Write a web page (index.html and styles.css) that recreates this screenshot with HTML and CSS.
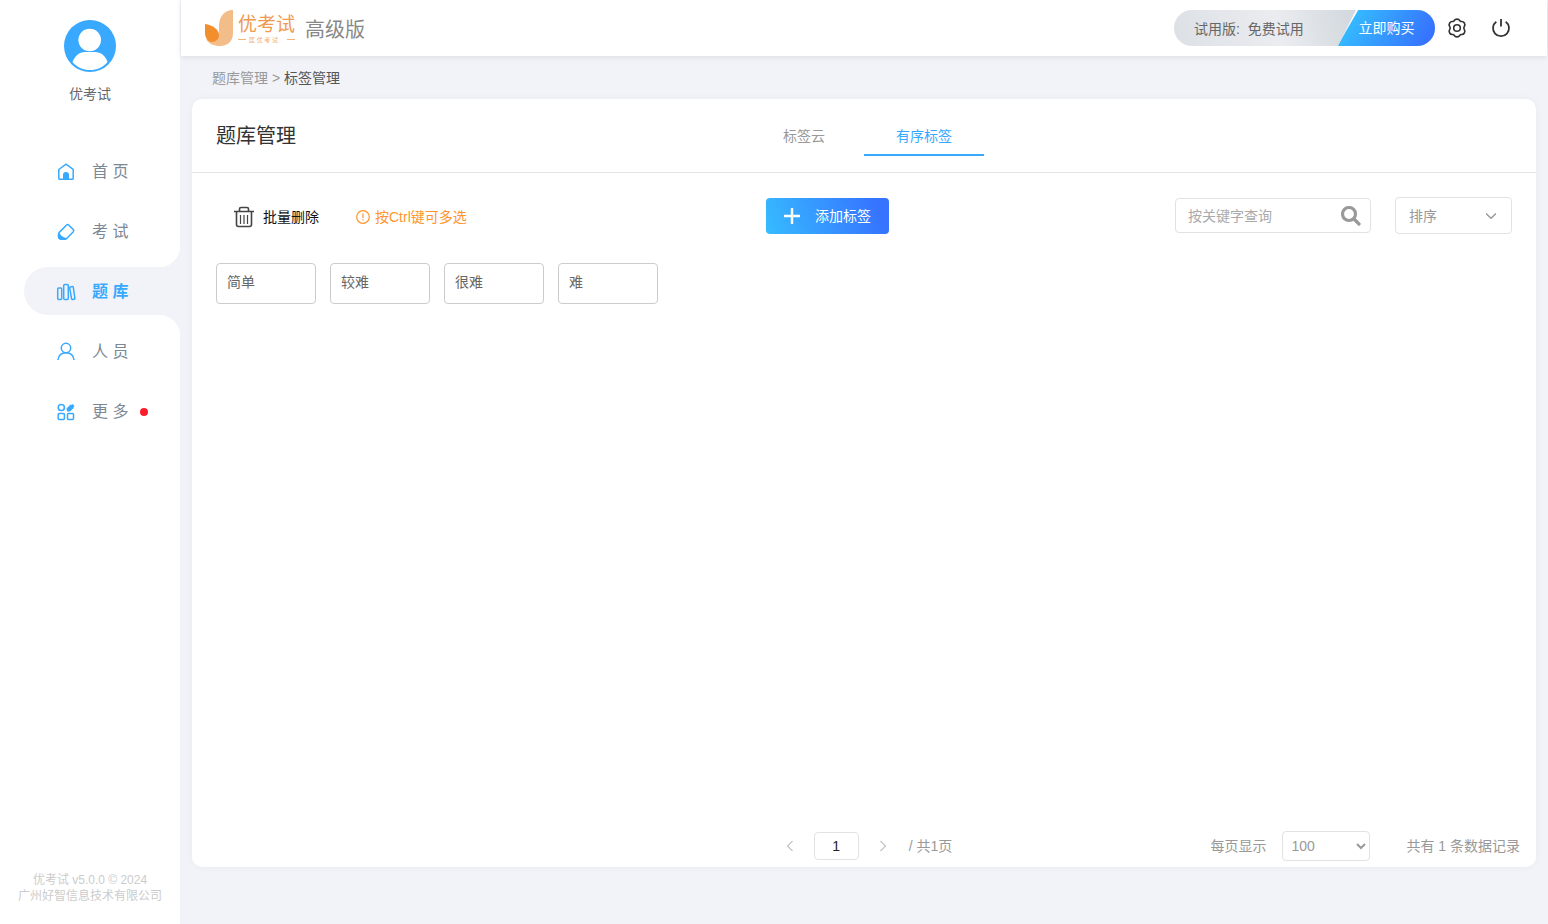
FILE: index.html
```html
<!DOCTYPE html>
<html lang="zh-CN">
<head>
<meta charset="utf-8">
<title>标签管理</title>
<link rel="stylesheet" href="styles.css">
</head>
<body>
<aside class="sidebar">
  <div class="profile">
    <svg class="avatar" viewBox="0 0 52 52" aria-hidden="true"><circle cx="26" cy="26" r="26" fill="#38a9ff"/><circle cx="25.700" cy="20" r="11.300" fill="#fff"/><path d="M8.500 42C11 36 15 32 21 32H31C37 32 41.500 36 43.500 42C39 47.500 33 50 26 50S13 47.500 8.500 42Z" fill="#fff"/></svg>
    <span>优考试</span>
  </div>
  <nav class="nav">
    <a class="nav-item" href="#"><svg viewBox="0 0 20 20"><path d="M2.800 7.500 10 2.200 17.200 7.500V16.200Q17.200 17.300 16.100 17.300H3.900Q2.800 17.300 2.800 16.200Z"/><path class="solid" d="M7 18V13a3 3 0 0 1 6 0V18Z"/></svg><span>首 页</span></a>
    <a class="nav-item" href="#"><svg viewBox="0 0 20 20"><path d="M3.300 10.400 10.600 3Q11.600 2 12.700 3L17.300 7.600Q18.300 8.600 17.300 9.700L11 16.200Q10 17.300 8.500 17.300H5.500Q3 17.300 2.500 14.600 2.100 11.700 3.300 10.400Z"/><path class="solid" d="M3 10C4 13 6.500 15.300 11 16.200L8.800 18H5.300C2.500 17.700 1.500 15 2 12.300Z"/></svg><span>考 试</span></a>
    <a class="nav-item active" href="#"><svg viewBox="0 0 20 20"><rect x="1.700" y="6" width="4" height="11.500" rx="1"/><rect x="7.700" y="2.400" width="4.600" height="15.100" rx="1"/><path d="M13.700 5.800Q13.600 5 14.400 4.900L16.400 4.600Q17.100 4.500 17.300 5.300L18.900 16.400Q19 17.200 18.200 17.300L16.500 17.500Q15.800 17.600 15.600 16.800Z"/></svg><span>题 库</span></a>
    <a class="nav-item" href="#"><svg viewBox="0 0 20 20"><circle cx="10" cy="6" r="4.700"/><path d="M1.900 18C2.500 13.300 5.800 10.700 10 10.700S17.500 13.300 18.100 18"/></svg><span>人 员</span></a>
    <a class="nav-item" href="#"><svg viewBox="0 0 20 20"><circle cx="5.300" cy="5.500" r="3.100"/><rect x="2.200" y="11.500" width="6.200" height="6" rx="1"/><rect x="11.500" y="11.500" width="6" height="6" rx="1"/><path class="solid" d="M10.500 6.500 14.500 2.500 15.500 3 16.600 1.900 18.600 3.900 17.500 5 17.700 6 14 9.500H11Z"/></svg><span>更 多</span><i class="dot"></i></a>
  </nav>
  <footer class="copyright">优考试 v5.0.0 © 2024<br>广州好智信息技术有限公司</footer>
</aside>
<div class="page">
  <header class="topbar">
    <svg class="logo" viewBox="0 0 92 38" role="img" aria-label="优考试">
      <path d="M28 1V24C28 32 23 37 15 37C9 37 4 35 1 30C8 34 14 29 14 21V17C14 8 19 1 28 1Z" fill="#f3bd8a"/>
      <path d="M0 15C8 16 14 21 14 26C14 30 11 33 7 33C3 33 0 29 0 24Z" fill="#f28f2c"/>
      <text class="logo-name" x="33" y="22">优考试</text>
      <text class="logo-sub" x="44" y="33">匡 优 考 试</text>
      <path d="M33 30.500H41M82 30.500H90" stroke="#f3b27a"/>
    </svg>
    <span class="edition">高级版</span>
    <div class="plan"><span class="plan-name">试用版:&nbsp; 免费试用</span><button class="buy" type="button">立即购买</button></div>
    <button class="icon-button" type="button" aria-label="设置"><svg viewBox="0 0 20 20"><path d="M7.200 2.700C8.200 .6 11.800 .6 12.800 2.700 13.200 3.500 13.700 3.700 14.600 3.500 16.900 3.300 18.700 6.200 17.400 8.200 16.600 9.400 16.600 10.600 17.400 11.800 18.700 13.800 16.900 16.700 14.600 16.500 13.700 16.300 13.200 16.500 12.800 17.300 11.800 19.400 8.200 19.400 7.200 17.300 6.800 16.500 6.300 16.300 5.400 16.500 3.100 16.700 1.300 13.800 2.600 11.800 3.400 10.600 3.400 9.400 2.600 8.200 1.300 6.200 3.100 3.300 5.400 3.500 6.300 3.700 6.800 3.500 7.200 2.700Z"/><circle cx="10" cy="10" r="3.300"/></svg></button>
    <button class="icon-button" type="button" aria-label="退出"><svg viewBox="0 0 20 20"><path d="M10 1V8.500M5.300 3.700A8 8 0 1 0 14.700 3.700"/></svg></button>
  </header>
  <div class="breadcrumb"><a href="#">题库管理</a> &gt; <span>标签管理</span></div>
  <main class="card">
    <header class="card-head">
      <h1>题库管理</h1>
      <div class="tabs"><a href="#">标签云</a><a class="active" href="#">有序标签</a></div>
    </header>
    <div class="toolbar">
      <div class="actions">
        <button class="delete" type="button"><svg viewBox="0 0 20 22"><path d="M0 5.500H20M5.500 5V3Q5.500 1.500 7 1.500H13Q14.500 1.500 14.500 3V5M2.500 6V18.500Q2.500 20.500 4.500 20.500H15.500Q17.500 20.500 17.500 18.500V6"/><path d="M6.500 9V18M10 9V18M13.500 9V18" stroke-width="1.200"/></svg>批量删除</button>
        <span class="hint"><svg viewBox="0 0 14 14"><circle cx="7" cy="7" r="6.300"/><path d="M7 3.500V8M7 9.300V10.500"/></svg>按Ctrl键可多选</span>
      </div>
      <button class="add" type="button"><svg viewBox="0 0 16 16"><path d="M8 0V16M0 8H16"/></svg>添加标签</button>
      <div class="filters">
        <label class="search"><input type="text" placeholder="按关键字查询" aria-label="按关键字查询"><svg viewBox="0 0 20 20"><circle cx="8" cy="8" r="6.500"/><path d="M13 13 18 18" stroke-linecap="round"/></svg></label>
        <button class="sort" type="button">排序<svg viewBox="0 0 10 6"><path d="M0 .5 5 5.300 10 .5"/></svg></button>
      </div>
    </div>
    <div class="tags"><div class="tag">简单</div><div class="tag">较难</div><div class="tag">很难</div><div class="tag">难</div></div>
    <footer class="card-foot">
      <div class="pager">
        <button type="button" aria-label="上一页"><svg viewBox="0 0 6 10"><path d="M5.500 0 .5 5 5.500 10"/></svg></button>
        <input type="text" value="1" aria-label="页码">
        <button type="button" aria-label="下一页"><svg viewBox="0 0 6 10"><path d="M.5 0 5.500 5 .5 10"/></svg></button>
        <span>/ 共1页</span>
      </div>
      <div class="page-size"><label for="size">每页显示</label><select id="size"><option>100</option></select><span class="total">共有 1 条数据记录</span></div>
    </footer>
  </main>
</div>
</body>
</html>
```

FILE: styles.css
```css
* { box-sizing: border-box; }
body {
  margin: 0;
  min-height: 100vh;
  display: flex;
  background: #f2f3f8;
  color: #666;
  font: 14px/20px "Liberation Sans", "Noto Sans CJK SC", sans-serif;
}
button, input, select { font: inherit; color: inherit; }
button { border: 0; padding: 0; background: none; cursor: pointer; }
a { color: inherit; text-decoration: none; }
svg { display: block; flex: none; fill: none; stroke: currentColor; }

.sidebar {
  flex: none;
  width: 180px;
  display: flex;
  flex-direction: column;
  background: #fff;
}
.profile {
  display: flex;
  flex-direction: column;
  align-items: center;
  gap: 12px;
  padding-top: 20px;
}
.avatar { width: 52px; height: 52px; stroke: none; }
.nav {
  display: flex;
  flex-direction: column;
  gap: 12px;
  padding: 43px 0 0 24px;
}
.nav-item {
  position: relative;
  height: 48px;
  display: flex;
  align-items: center;
  padding: 2px 0 0 32px;
  font-size: 16px;
  color: #7b8896;
}
.nav-item svg {
  width: 20px;
  height: 20px;
  margin-right: 16px;
  color: #38a9ff;
  stroke-width: 1.5;
}
.nav-item .solid { fill: currentColor; stroke: none; }
.nav-item.active {
  background: #f2f3f8;
  border-radius: 24px 0 0 24px;
  color: #38a9ff;
  font-weight: bold;
}
.active.nav-item::before, .active.nav-item::after {
  content: "";
  position: absolute;
  right: 0;
  width: 22px;
  height: 22px;
}
.active.nav-item::before { bottom: 100%; background: radial-gradient(circle at 0 0, #fff 22px, #f2f3f8 23px); }
.active.nav-item::after { top: 100%; background: radial-gradient(circle at 0 100%, #fff 22px, #f2f3f8 23px); }
.dot { width: 8px; height: 8px; margin-left: 12px; border-radius: 50%; background: #fb1d2a; }
.copyright {
  margin-top: auto;
  padding-bottom: 20px;
  text-align: center;
  font-size: 12px;
  line-height: 16px;
  color: #ccc;
}

.page { flex: 1; min-width: 0; display: flex; flex-direction: column; }
.topbar {
  height: 56px;
  margin: 0 1px;
  padding: 0 36px 0 24px;
  display: flex;
  align-items: center;
  background: #fff;
  box-shadow: 0 1px 6px rgba(0, 0, 0, .1);
}
.logo { width: 92px; height: 38px; stroke: none; }
.logo-name { font-size: 19px; fill: #f09a50; }
.logo-sub { font-size: 6px; fill: #f3ac70; }
.edition { margin-left: 8px; padding-top: 3px; font-size: 20px; color: #888; }
.plan {
  height: 36px;
  margin-left: auto;
  display: flex;
  border-radius: 18px;
  overflow: hidden;
  background: linear-gradient(75deg, #dce0e5, #ebecf0 40%, #d5dbe0 65%, #c3ccd4);
}
.plan-name { width: 164px; padding-left: 20px; line-height: 38px; white-space: nowrap; }
.buy {
  width: 97px;
  color: #fff;
  background: linear-gradient(120deg, #fff 17px, #35b8ff 18px, #3673ff 90%);
  clip-path: polygon(18px 0, 100% 0, 100% 100%, 0 100%);
}
.icon-button { width: 20px; height: 20px; margin-left: 12px; color: #333; stroke-width: 1.6; }
.icon-button + .icon-button { margin-left: 24px; stroke-width: 1.8; }
.icon-button svg { width: 20px; height: 20px; }

.breadcrumb { padding: 12px 32px 11px; color: #999; }
.breadcrumb span { color: #555; }
.card {
  flex: 1;
  display: flex;
  flex-direction: column;
  margin: 0 12px 57px;
  background: #fff;
  border-radius: 10px;
  box-shadow: 0 0 8px rgba(0, 0, 0, .04);
}
.card-head {
  height: 74px;
  padding: 0 24px;
  display: grid;
  grid-template-columns: 1fr auto 1fr;
  align-items: center;
  border-bottom: 1px solid #e4e4e6;
}
h1 { margin: 0; font-size: 20px; font-weight: normal; color: #333; }
.tabs { display: flex; color: #999; }
.tabs a { width: 120px; height: 40px; text-align: center; line-height: 40px; border-bottom: 2px solid transparent; }
.tabs .active { color: #38a9ff; border-color: #38a9ff; }

.toolbar {
  display: flex;
  align-items: center;
  justify-content: space-between;
  padding: 24px 24px 0;
}
.actions { width: 264px; padding: 3px 0 0 18px; display: flex; gap: 37px; }
.delete { display: flex; align-items: center; gap: 9px; color: #111; }
.delete svg { width: 20px; height: 22px; color: #444; stroke-width: 1.6; }
.hint { display: flex; align-items: center; gap: 5px; color: #ff952e; white-space: nowrap; }
.hint svg { width: 14px; height: 14px; stroke-width: 1.2; }
.add {
  width: 123px;
  height: 36px;
  display: flex;
  align-items: center;
  justify-content: center;
  gap: 15px;
  border-radius: 4px;
  color: #fff;
  background: linear-gradient(70deg, #36bcff, #3673ff 90%);
}
.add svg { width: 16px; height: 16px; stroke-width: 2.4; }
.filters { display: flex; align-items: center; gap: 24px; }
.search, .sort {
  display: flex;
  align-items: center;
  border: 1px solid #e2e2e4;
  border-radius: 4px;
}
.search { width: 196px; height: 35px; padding: 0 9px 0 12px; }
.search input { flex: 1; min-width: 0; border: 0; padding: 0; outline: 0; }
.search input::placeholder { color: #aaa; }
.search svg { width: 20px; height: 20px; color: #999; stroke-width: 3.2; }
.sort { width: 117px; height: 37px; padding: 0 15px 0 13px; justify-content: space-between; color: #999; }
.sort svg { width: 10px; height: 6px; stroke-width: 1.4; }

.tags { display: flex; flex-wrap: wrap; gap: 14px; padding: 29px 24px; }
.tag {
  width: 100px;
  height: 41px;
  padding: 0 10px;
  line-height: 37px;
  border: 1px solid #ccc;
  border-radius: 4px;
}
.card-foot {
  margin-top: auto;
  padding: 0 16px 6px;
  display: grid;
  grid-template-columns: 1fr auto 1fr;
  align-items: center;
  color: #999;
}
.pager { grid-column: 2; display: flex; align-items: center; padding-left: 4px; }
.pager button { width: 20px; height: 20px; display: grid; place-items: center; }
.pager svg { width: 6px; height: 10px; }
.pager input {
  width: 45px;
  height: 28px;
  margin: 0 14px;
  border: 1px solid #e2e2e4;
  border-radius: 4px;
  text-align: center;
  color: #222;
}
.pager span { margin-left: 16px; }
.page-size { display: flex; align-items: center; justify-content: flex-end; }
.page-size select {
  width: 88px;
  height: 30px;
  margin: 0 36px 0 16px;
  padding: 0 4px;
  border: 1px solid #e2e2e4;
  border-radius: 4px;
  background: #fff;
}
```
